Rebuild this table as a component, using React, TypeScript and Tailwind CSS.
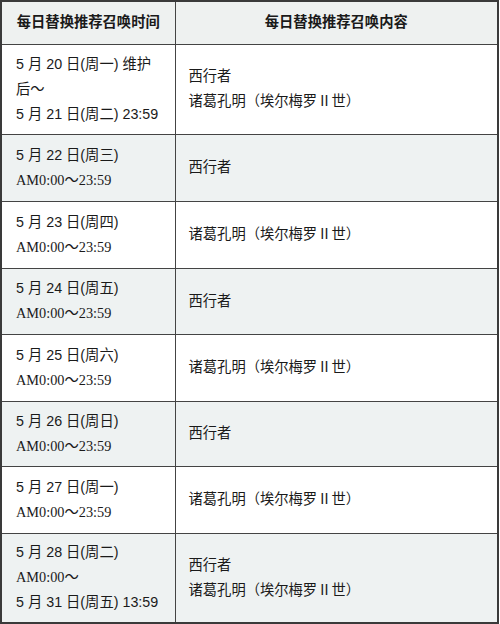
import React from "react";

type Row = {
  time: { text: string; serif?: boolean }[];
  content: string[];
  shaded: boolean;
  height: string;
};

const ZG = "诸葛孔明（埃尔梅罗Ⅱ世）";
const XX = "西行者";

const rows: Row[] = [
  {
    time: [{ text: "5 月 20 日(周一) 维护" }, { text: "后～" }, { text: "5 月 21 日(周二) 23:59" }],
    content: [XX, ZG],
    shaded: false,
    height: "h-[90px]",
  },
  {
    time: [{ text: "5 月 22 日(周三)" }, { text: "AM0:00～23:59", serif: true }],
    content: [XX],
    shaded: true,
    height: "h-[67px]",
  },
  {
    time: [{ text: "5 月 23 日(周四)" }, { text: "AM0:00～23:59", serif: true }],
    content: [ZG],
    shaded: false,
    height: "h-[67px]",
  },
  {
    time: [{ text: "5 月 24 日(周五)" }, { text: "AM0:00～23:59", serif: true }],
    content: [XX],
    shaded: true,
    height: "h-[66px]",
  },
  {
    time: [{ text: "5 月 25 日(周六)" }, { text: "AM0:00～23:59", serif: true }],
    content: [ZG],
    shaded: false,
    height: "h-[67px]",
  },
  {
    time: [{ text: "5 月 26 日(周日)" }, { text: "AM0:00～23:59", serif: true }],
    content: [XX],
    shaded: true,
    height: "h-[65px]",
  },
  {
    time: [{ text: "5 月 27 日(周一)" }, { text: "AM0:00～23:59", serif: true }],
    content: [ZG],
    shaded: false,
    height: "h-[67px]",
  },
  {
    time: [
      { text: "5 月 28 日(周二)" },
      { text: "AM0:00～", serif: true },
      { text: "5 月 31 日(周五) 13:59" },
    ],
    content: [XX, ZG],
    shaded: true,
    height: "h-[90px]",
  },
];

const sans = "font-['Liberation_Sans','Noto_Sans_CJK_SC',sans-serif]";
const serif = "font-['Liberation_Serif','Noto_Sans_CJK_SC',serif]";

export default function App() {
  return (
    <div className="w-[500px] h-[624px] bg-white">
      <table className={`w-[499px] border-collapse border-2 border-[#3a3a3a] text-[14.3px] leading-[25px] text-[#1a1a1a] ${sans}`}>
        <colgroup>
          <col className="w-[174px]" />
          <col />
        </colgroup>
        <thead>
          <tr className="h-[43px] bg-[#eef1f0]">
            <th className="border border-[#444] text-center font-bold">每日替换推荐召唤时间</th>
            <th className="border border-[#444] text-center font-bold">每日替换推荐召唤内容</th>
          </tr>
        </thead>
        <tbody>
          {rows.map((r, i) => (
            <tr key={i} className={`${r.height} ${r.shaded ? "bg-[#eef2f2]" : "bg-white"}`}>
              <td className="border border-[#444] px-[14px] align-middle">
                {r.time.map((t, j) => (
                  <div key={j} className={t.serif ? serif : ""}>
                    {t.text}
                  </div>
                ))}
              </td>
              <td className="border border-[#444] px-[13px] align-middle">
                {r.content.map((c, j) => (
                  <div key={j}>{c}</div>
                ))}
              </td>
            </tr>
          ))}
        </tbody>
      </table>
    </div>
  );
}
